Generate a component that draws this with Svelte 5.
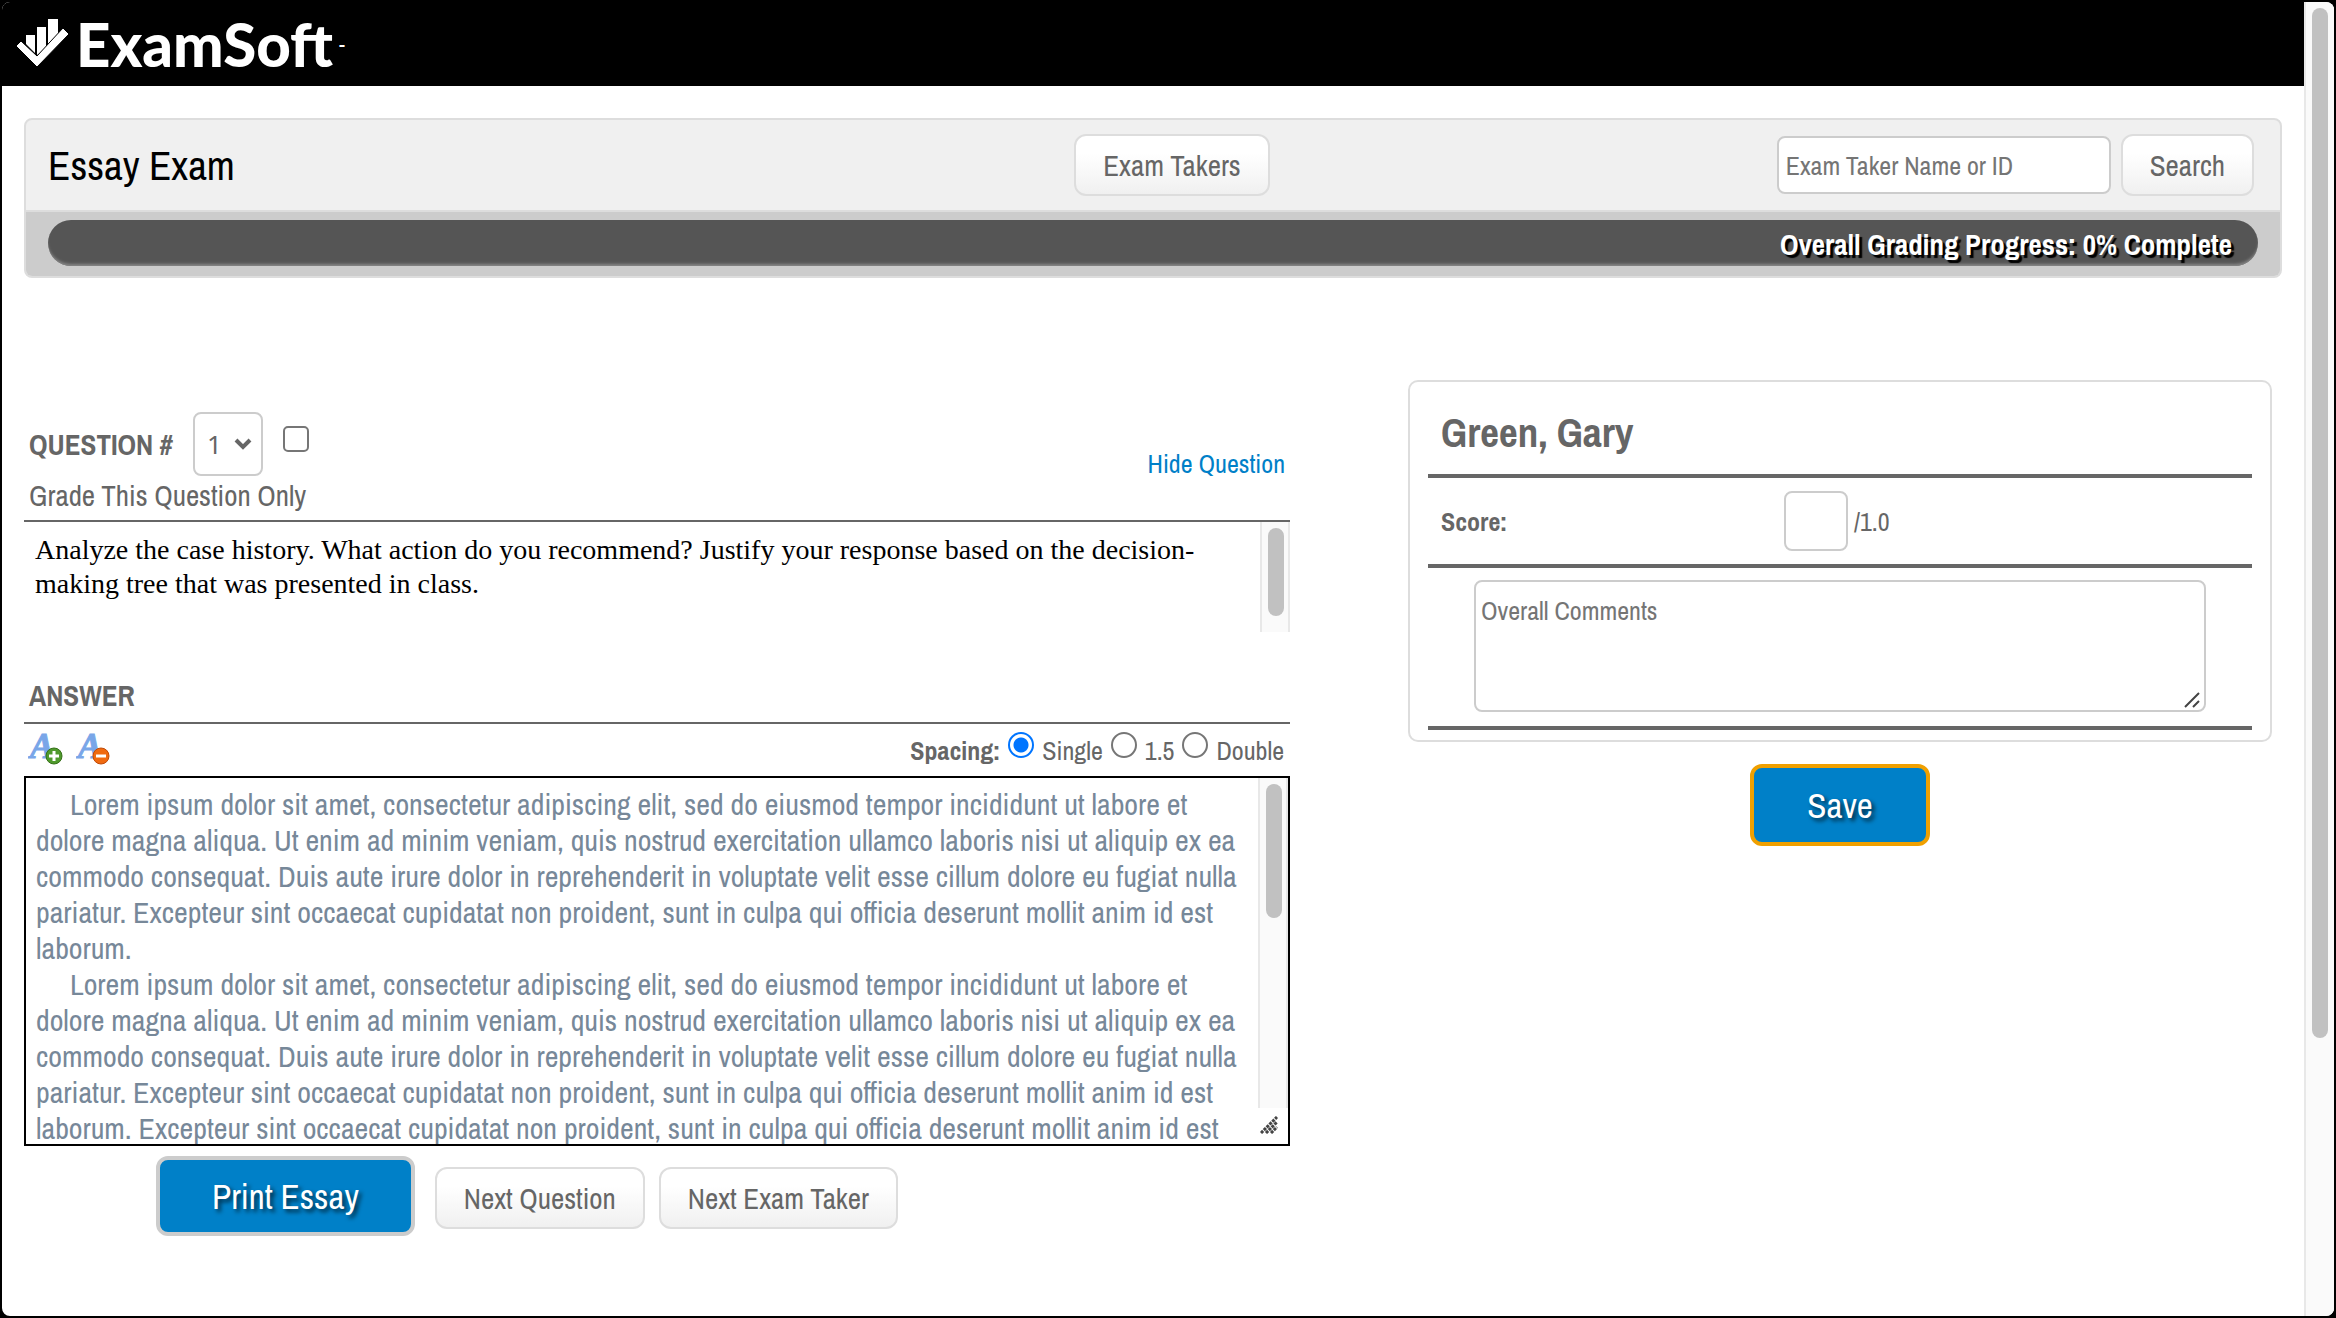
<script lang="ts">
	type Spacing = 'single' | 'one-half' | 'double';

	const spacings: { value: Spacing; label: string }[] = [
		{ value: 'single', label: 'Single' },
		{ value: 'one-half', label: '1.5' },
		{ value: 'double', label: 'Double' }
	];

	const lorem =
		'Lorem ipsum dolor sit amet, consectetur adipiscing elit, sed do eiusmod tempor incididunt ut labore et dolore magna aliqua. Ut enim ad minim veniam, quis nostrud exercitation ullamco laboris nisi ut aliquip ex ea commodo consequat. Duis aute irure dolor in reprehenderit in voluptate velit esse cillum dolore eu fugiat nulla pariatur. Excepteur sint occaecat cupidatat non proident, sunt in culpa qui officia deserunt mollit anim id est laborum.';

	const paragraphs = [
		lorem,
		lorem +
			' Excepteur sint occaecat cupidatat non proident, sunt in culpa qui officia deserunt mollit anim id est'
	];

	let spacing = $state<Spacing>('single');
	let question = $state('1');
	let onlyThis = $state(false);
	let showQuestion = $state(true);
	let search = $state('');
	let score = $state('');
	let comments = $state('');
	let progress = $state(0);

	function toggleQuestion(e: MouseEvent) {
		e.preventDefault();
		showQuestion = !showQuestion;
	}
</script>

<div class="window">
	<div class="page">
		<header class="brand">
			<svg class="mark" viewBox="0 0 54 50" aria-hidden="true">
				<path d="M10 16h9v18l-9-9zM21 8h9v22l-9 6zM32 0h10v18L32 28z" fill="#fff" />
				<path d="M0 27l5-5 16 15L47 9l6 6-32 33z" fill="#fff" stroke="#000" stroke-width="1" />
			</svg>
			<span class="name">ExamSoft</span><span class="tm">-</span>
		</header>

		<main>
			<section class="panel">
				<div class="panel-top">
					<h1>Essay Exam</h1>
					<button class="btn">Exam Takers</button>
					<form class="search" onsubmit={(e) => e.preventDefault()}>
						<input
							type="text"
							aria-label="Exam Taker Name or ID"
							placeholder="Exam Taker Name or ID"
							bind:value={search}
						/>
						<button class="btn">Search</button>
					</form>
				</div>
				<div class="panel-progress">
					<div class="bar">Overall Grading Progress: {progress}% Complete</div>
				</div>
			</section>

			<div class="columns">
				<section class="left">
					<div class="question-head">
						<div>
							<div class="question-row">
								<label class="heading" for="question">QUESTION #</label>
								<span class="select">
									<select id="question" bind:value={question}>
										<option value="1">1</option>
									</select>
									<svg viewBox="0 0 18 12" aria-hidden="true">
										<path d="M2 2l7 7 7-7" fill="none" stroke="#666" stroke-width="4" />
									</svg>
								</span>
								<input id="only" type="checkbox" bind:checked={onlyThis} />
							</div>
							<label class="only" for="only">Grade This Question Only</label>
						</div>
						<a href="#question" onclick={toggleQuestion}>
							{showQuestion ? 'Hide' : 'Show'} Question
						</a>
					</div>

					{#if showQuestion}
						<div class="question-box">
							<p>
								Analyze the case history. What action do you recommend? Justify your response based
								on the decision-making tree that was presented in class.
							</p>
							<div class="track"><div class="thumb question-thumb"></div></div>
						</div>
					{/if}

					<h2 class="heading">ANSWER</h2>
					<div class="tools">
						<button class="font-btn" aria-label="Increase font size">
							<svg viewBox="0 -8 36 44" aria-hidden="true">
								<text x="2" y="26" class="glyph">A</text>
								<circle cx="26" cy="24" r="8" fill="#4f9a2c" stroke="#357018" />
								<path d="M26 19v10M21 24h10" stroke="#fff" stroke-width="3" />
							</svg>
						</button>
						<button class="font-btn" aria-label="Decrease font size">
							<svg viewBox="0 -8 36 44" aria-hidden="true">
								<text x="2" y="26" class="glyph">A</text>
								<circle cx="25" cy="24" r="8" fill="#f06a10" stroke="#c04a08" />
								<path d="M20 24h10" stroke="#fff" stroke-width="3" />
							</svg>
						</button>
						<div class="spacing" role="radiogroup" aria-labelledby="spacing-label">
							<b id="spacing-label">Spacing:</b>
							{#each spacings as s}
								<label>
									<input type="radio" name="spacing" value={s.value} bind:group={spacing} />
									{s.label}
								</label>
							{/each}
						</div>
					</div>

					<div class="answer">
						<div class="essay {spacing}">
							{#each paragraphs as p}
								<p>{p}</p>
							{/each}
						</div>
						<div class="gutter">
							<div class="track"><div class="thumb answer-thumb"></div></div>
							<svg class="grip" viewBox="0 0 18 18" aria-hidden="true">
								<path d="M1 17L17 1M6 17L17 6M11 17l6-6" stroke="#444" stroke-width="3" stroke-dasharray="3 1" />
							</svg>
						</div>
					</div>

					<div class="actions">
						<button class="primary">Print Essay</button>
						<button class="btn">Next Question</button>
						<button class="btn">Next Exam Taker</button>
					</div>
				</section>

				<aside>
					<div class="card">
						<h2>Green, Gary</h2>
						<div class="score">
							<label for="score">Score:</label>
							<span><input id="score" type="text" bind:value={score} />/1.0</span>
						</div>
						<div class="comments">
							<textarea
								aria-label="Overall Comments"
								placeholder="Overall Comments"
								bind:value={comments}
							></textarea>
							<svg class="corner" viewBox="0 0 16 16" aria-hidden="true">
								<path d="M1 15L15 1M9 15l6-6" stroke="#444" stroke-width="2" />
							</svg>
						</div>
					</div>
					<button class="primary save">Save</button>
				</aside>
			</div>
		</main>
	</div>
	<div class="track page-track"><div class="thumb page-thumb"></div></div>
</div>

<style>
	:global(body) {
		background: #000;
	}

	* {
		box-sizing: border-box;
	}

	.window {
		display: flex;
		min-height: 100vh;
		border: 2px solid #000;
		border-radius: 10px;
		overflow: hidden;
		background: #fff;
		color: #666;
		font-family: 'Archivo Narrow', 'Liberation Sans Narrow', 'Arial Narrow', sans-serif;
		font-size: 29px;
	}

	.page {
		flex: 1;
		min-width: 0;
	}

	button,
	input,
	select,
	textarea {
		font-family: inherit;
		color: inherit;
	}

	h1,
	h2,
	p {
		margin: 0;
	}

	.brand {
		display: flex;
		align-items: center;
		height: 84px;
		padding-left: 14px;
		background: #000;
		color: #fff;
	}
	.mark {
		width: 54px;
		height: 50px;
		margin-right: 6px;
	}
	.name {
		font-family: Lato, sans-serif;
		font-weight: 900;
		font-size: 60px;
		line-height: 84px;
	}
	.tm {
		margin-left: 6px;
		font-size: 20px;
	}

	main {
		padding: 32px 22px;
	}

	.panel {
		border: 2px solid #ddd;
		border-radius: 8px;
		background: #f0f0f0;
		overflow: hidden;
	}
	.panel-top {
		display: grid;
		grid-template-columns: 1026fr auto 984fr;
		align-items: center;
		height: 92px;
		padding: 0 26px 0 22px;
		border-bottom: 2px solid #ddd;
	}
	h1 {
		color: #000;
		font-weight: 400;
		font-size: 41px;
	}
	.search {
		display: flex;
		justify-content: flex-end;
		align-items: center;
		gap: 10px;
	}
	.search input {
		width: 334px;
		height: 58px;
		padding: 0 7px;
		border: 2px solid #ccc;
		border-radius: 8px;
		background: #fff;
		font-size: 26px;
	}
	.search input::placeholder,
	textarea::placeholder {
		color: #757575;
	}

	.btn {
		height: 62px;
		padding: 0 27px;
		border: 2px solid #ddd;
		border-radius: 12px;
		background: linear-gradient(#fff 30%, #f0f0f0);
		font-size: 29px;
	}

	.panel-progress {
		padding: 8px 22px 10px;
		background: #ccc;
	}
	.bar {
		height: 46px;
		padding-right: 26px;
		border-radius: 23px;
		background: #555;
		box-shadow: inset 0 -3px 3px -1px #888;
		color: #fff;
		font-weight: 700;
		font-size: 29px;
		line-height: 50px;
		text-align: right;
		text-shadow: 3px 3px 1px #000;
	}

	.columns {
		display: grid;
		grid-template-columns: 1266fr 864fr;
		gap: 118px;
		align-items: start;
		margin-top: 102px;
		padding-right: 10px;
	}

	.left {
		min-width: 0;
		padding-top: 32px;
	}
	.heading {
		font-weight: 700;
		font-size: 29px;
	}
	.question-head {
		display: flex;
		justify-content: space-between;
		align-items: center;
		padding: 0 5px;
		border-bottom: 2px solid #666;
	}
	.question-head a {
		color: #0080c8;
		font-size: 26px;
		line-height: 30px;
		padding-bottom: 4px;
		text-decoration: none;
	}
	.question-row {
		display: flex;
		align-items: center;
		gap: 20px;
		height: 64px;
	}
	.select {
		display: grid;
		align-items: center;
	}
	.select select {
		grid-area: 1 / 1;
		width: 70px;
		height: 64px;
		padding: 0 12px;
		appearance: none;
		border: 2px solid #ccc;
		border-radius: 8px;
		background: #fff;
		font-family: 'Noto Sans', sans-serif;
		font-size: 26px;
	}
	.select svg {
		grid-area: 1 / 1;
		justify-self: end;
		width: 18px;
		height: 12px;
		margin-right: 11px;
		pointer-events: none;
	}
	input[type='checkbox'] {
		appearance: none;
		align-self: flex-start;
		width: 26px;
		height: 26px;
		margin: 14px 0 0;
		border: 2px solid #767676;
		border-radius: 5px;
	}
	.only {
		display: block;
		height: 44px;
		line-height: 40px;
	}

	.question-box {
		display: flex;
		justify-content: space-between;
		height: 110px;
	}
	.question-box p {
		padding: 11px;
		color: #000;
		font-family: 'Liberation Serif', serif;
		font-size: 28px;
		line-height: 34px;
	}

	.track {
		flex: none;
		width: 30px;
		padding: 6px;
		border: solid #e8e8e8;
		border-width: 0 2px;
		background: #fafafa;
	}
	.thumb {
		width: 16px;
		border-radius: 8px;
		background: #c1c1c1;
	}
	.question-thumb {
		height: 88px;
	}
	.answer-thumb {
		height: 134px;
	}
	.page-track {
		border-right-color: #fafafa;
	}
	.page-thumb {
		height: 1030px;
	}

	h2.heading {
		margin-top: 38px;
		padding-left: 5px;
		border-bottom: 2px solid #666;
		line-height: 52px;
	}
	.tools {
		display: flex;
		gap: 12px;
		height: 52px;
		padding: 0 6px 0 4px;
	}
	.font-btn {
		width: 36px;
		height: 44px;
		padding: 0;
		border: 0;
		background: none;
	}
	.font-btn svg {
		display: block;
		width: 36px;
		height: 44px;
	}
	.glyph {
		fill: #79a6e8;
		stroke: #79a6e8;
		stroke-width: 1px;
		font-family: 'Liberation Serif', serif;
		font-size: 36px;
		font-style: italic;
		font-weight: 700;
	}
	.spacing {
		display: flex;
		gap: 8px;
		margin-left: auto;
		padding-top: 6px;
		font-size: 26px;
		line-height: 42px;
	}
	.spacing label {
		display: flex;
		gap: 8px;
	}
	input[type='radio'] {
		appearance: none;
		width: 26px;
		height: 26px;
		margin: 2px 0 0;
		border: 2px solid #767676;
		border-radius: 50%;
	}
	input[type='radio']:checked {
		border-color: #0075ff;
		background: radial-gradient(#0075ff 7px, #fff 8px);
	}

	.answer {
		display: flex;
		height: 370px;
		border: 2px solid #000;
	}
	.essay {
		flex: 1;
		min-width: 0;
		padding: 8px 10px 0;
		overflow: hidden;
		color: #778899;
		font-size: 30px;
		line-height: 36px;
	}
	.essay.one-half {
		line-height: 54px;
	}
	.essay.double {
		line-height: 72px;
	}
	.essay p {
		text-indent: 34px;
	}
	.gutter {
		display: flex;
		flex-direction: column;
	}
	.gutter .track {
		flex: 1;
	}
	.grip {
		width: 18px;
		height: 18px;
		margin: 8px 2px 10px;
	}

	.actions {
		display: flex;
		align-items: baseline;
		gap: 14px;
		padding: 10px 0 0 132px;
	}
	.primary {
		height: 80px;
		padding: 0 52px;
		border: 4px solid #ccc;
		border-radius: 12px;
		background: #0080c8;
		color: #fff;
		font-size: 35px;
		text-shadow: 3px 3px 4px #000a;
	}
	.primary + .btn {
		margin-left: 6px;
	}

	aside {
		display: flex;
		flex-direction: column;
	}
	.card {
		padding: 10px 18px;
		border: 2px solid #ddd;
		border-radius: 10px;
	}
	.card h2 {
		padding-left: 13px;
		border-bottom: 4px solid #666;
		font-size: 41px;
		line-height: 82px;
	}
	.score {
		display: grid;
		grid-template-columns: 356px 1fr;
		align-items: center;
		height: 90px;
		border-bottom: 4px solid #666;
		font-size: 26px;
	}
	.score label {
		padding-left: 13px;
		font-weight: 700;
	}
	.score span {
		display: flex;
		align-items: center;
		gap: 6px;
	}
	.score input {
		width: 64px;
		height: 60px;
		border: 2px solid #ccc;
		border-radius: 8px;
	}
	.comments {
		position: relative;
		padding: 12px 46px 14px;
		border-bottom: 4px solid #666;
	}
	textarea {
		display: block;
		width: 100%;
		height: 132px;
		padding: 11px 5px;
		resize: none;
		border: 2px solid #ccc;
		border-radius: 8px;
		font-size: 26px;
	}
	.corner {
		position: absolute;
		right: 52px;
		bottom: 18px;
		width: 16px;
		height: 16px;
	}
	.save {
		align-self: center;
		width: 180px;
		height: 82px;
		margin-top: 22px;
		border-color: #f0a000;
	}
</style>
